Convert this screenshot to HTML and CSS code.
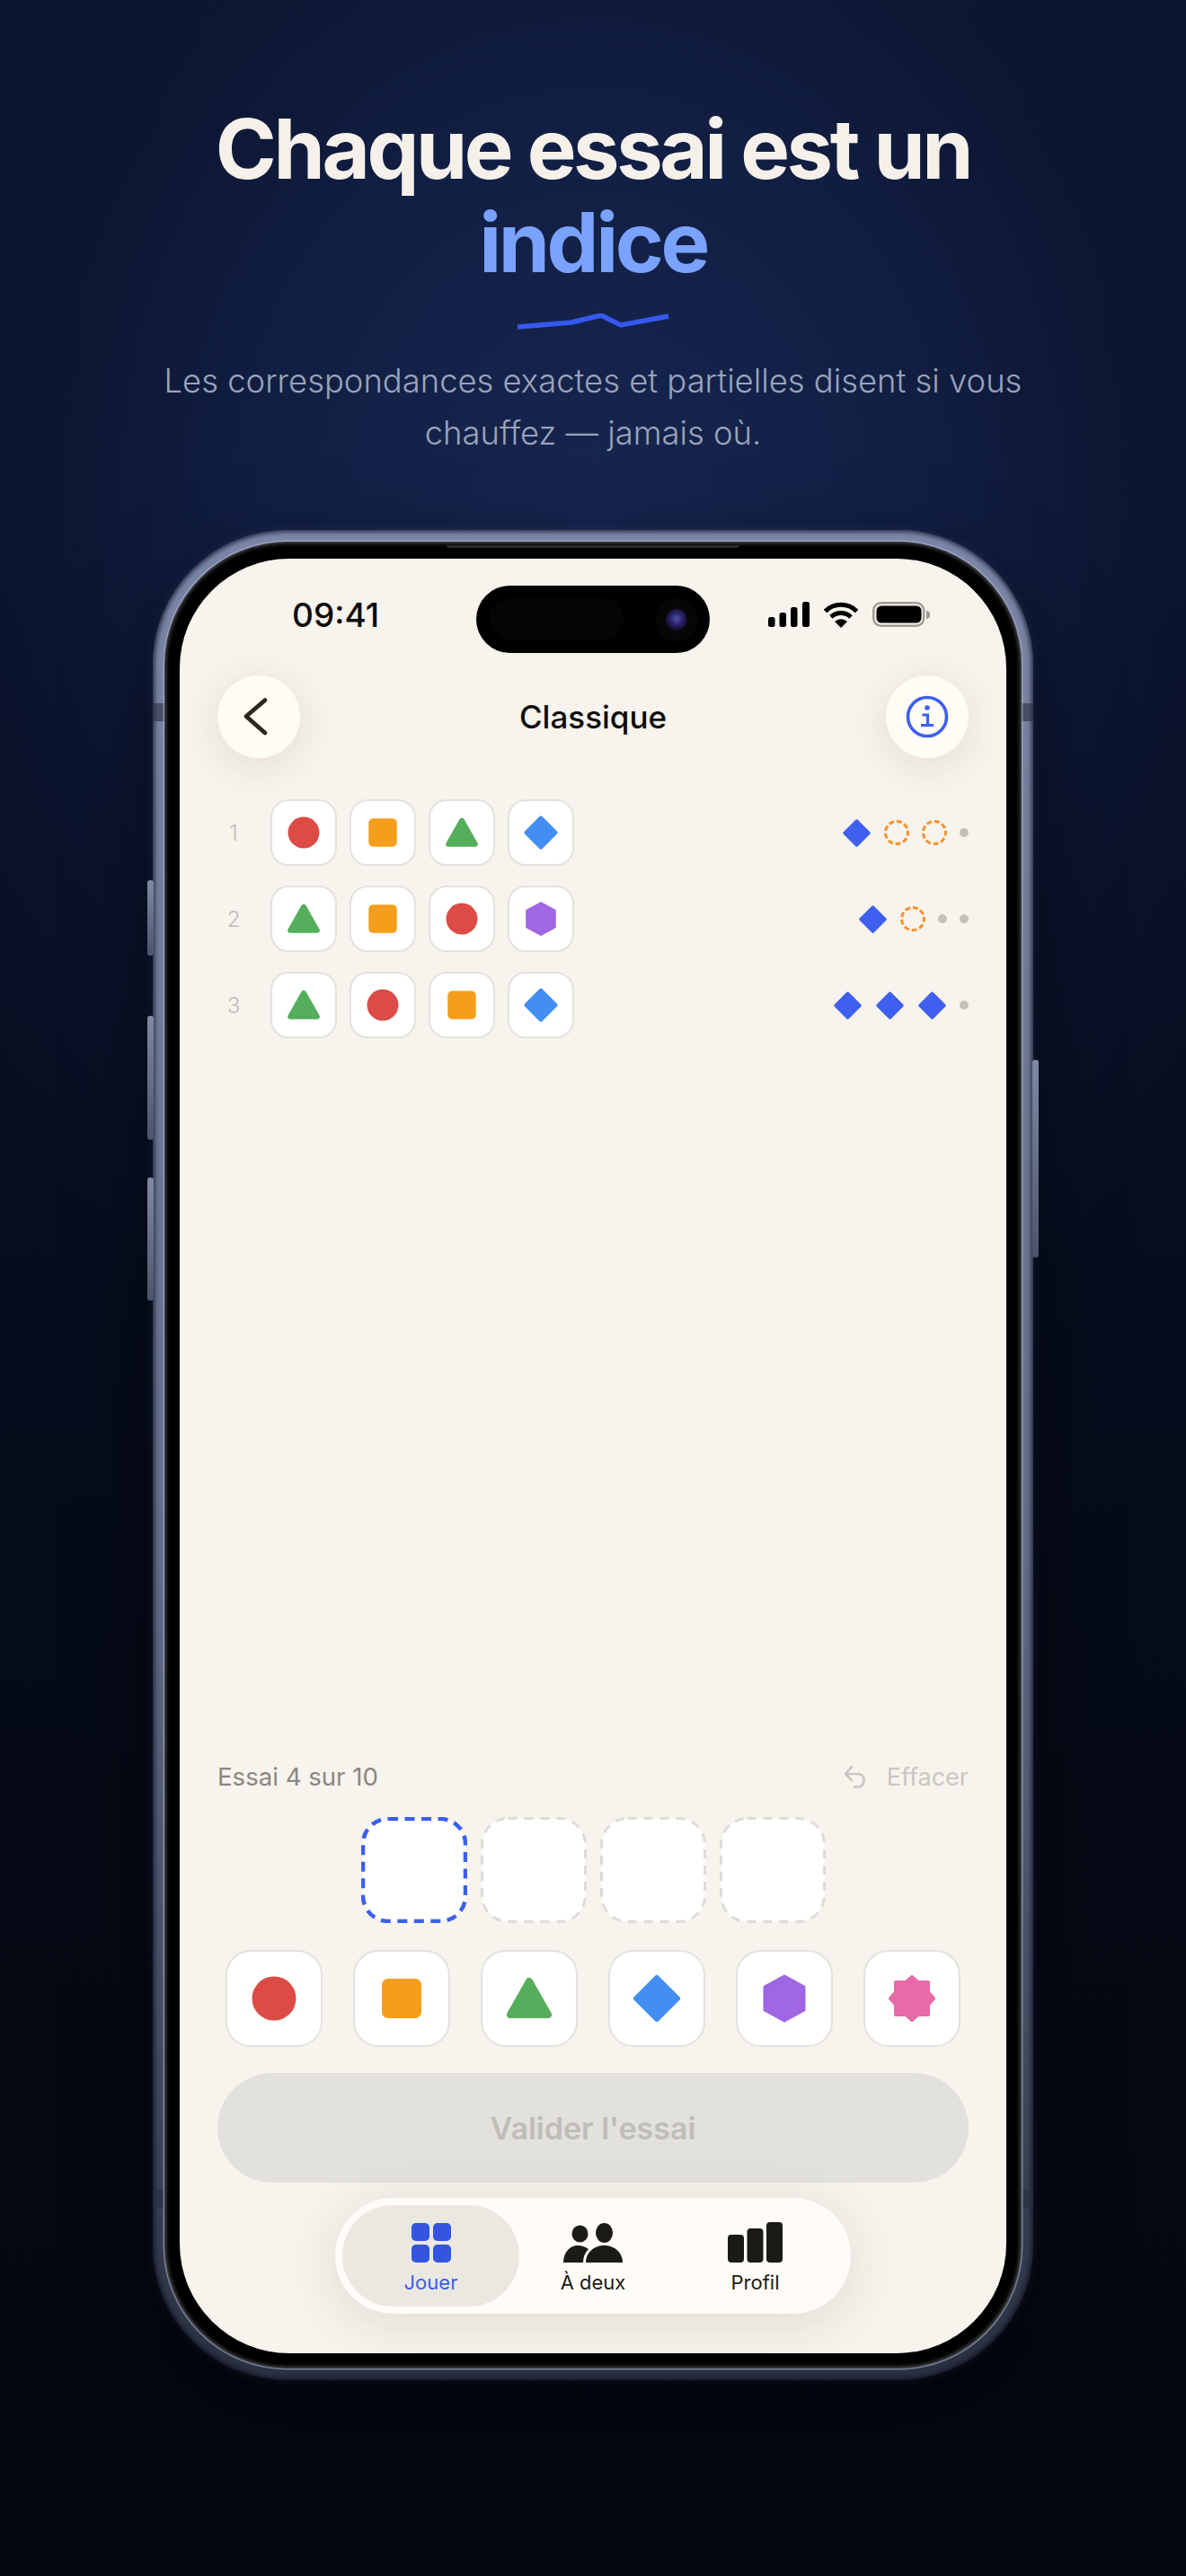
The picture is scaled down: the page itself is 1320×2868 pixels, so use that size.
FILE: index.html
```html
<!DOCTYPE html>
<html lang="fr">
<head>
  <meta charset="UTF-8">
  <title>Chaque essai est un indice</title>
  <meta name="viewport" content="width=device-width, initial-scale=1.0">
  <link rel="stylesheet" href="styles.css">
</head>
<body>
  <!-- shapes used by the board and the palette -->
  <svg class="sprite">
    <symbol id="s-circle" viewBox="0 0 56 56"><ellipse cx="28" cy="28" rx="24.5" ry="24.5" fill="#dd4b46"/></symbol>
    <symbol id="s-square" viewBox="0 0 56 56"><rect x="6" y="6" width="44" height="44" rx="7" fill="#f49e1c"/></symbol>
    <symbol id="s-triangle" viewBox="0 0 56 56"><polygon points="28,9 49,46 7,46" fill="#54ae5b" stroke="#54ae5b" stroke-width="8" stroke-linejoin="round"/></symbol>
    <symbol id="s-diamond" viewBox="0 0 56 56"><polygon points="28,5 51,28 28,51 5,28" fill="#438ef3" stroke="#438ef3" stroke-width="6" stroke-linejoin="round"/></symbol>
    <symbol id="s-hexagon" viewBox="0 0 56 56"><polygon points="28,3 50,15 50,41 28,53 6,41 6,15" fill="#9f67e3" stroke="#9f67e3" stroke-width="3" stroke-linejoin="round"/></symbol>
    <symbol id="s-flower" viewBox="0 0 56 56"><polygon points="28,4 34.500,10 46,10 46,21 52,28 46,35 46,46 34.500,46 28,52 21.500,46 10,46 10,35 4,28 10,21 10,10 21.500,10" fill="#e66ba6" stroke="#e66ba6" stroke-width="4" stroke-linejoin="round"/></symbol>
    <symbol id="s-exact" viewBox="0 0 33 33"><polygon points="16.5,3 30,16.5 16.5,30 3,16.5" fill="#3f5fee" stroke="#3f5fee" stroke-width="3.5" stroke-linejoin="round"/></symbol>
  </svg>

  <header class="hero">
    <h1>Chaque essai est un<br><span class="accent">indice</span></h1>
    <svg class="squiggle" width="172" height="18" viewBox="0 0 172 18"><polyline points="2,15 62,10 95,2 117,13 170,3" fill="none" stroke="#3558f0" stroke-width="5.500"/></svg>
    <p>Les correspondances exactes et partielles disent si vous<br>chauffez — jamais où.</p>
  </header>

  <div class="phone">
    <span class="side side-a"></span>
    <span class="side side-b"></span>
    <span class="side side-c"></span>
    <span class="side side-d"></span>
    <span class="band band-tl"></span>
    <span class="band band-tr"></span>
    <span class="band band-bl"></span>
    <span class="band band-br"></span>
    <div class="bezel">
      <span class="speaker"></span>
      <div class="screen">
        <div class="island">
          <span class="sensor"></span>
          <span class="camera"></span>
        </div>

        <div class="status">
          <span class="time">09:41</span>
          <div class="status-icons">
            <svg width="46" height="28" viewBox="0 0 46 28" fill="#000">
              <rect x="0" y="17" width="7.5" height="11" rx="2.5"/>
              <rect x="12.5" y="12" width="7.5" height="16" rx="2.5"/>
              <rect x="25" y="6" width="7.5" height="22" rx="2.5"/>
              <rect x="38" y="0" width="8" height="28" rx="2.5"/>
            </svg>
            <svg width="40" height="29" viewBox="0 0 40 29">
              <path d="M2.5 10.5 A25 25 0 0 1 37.5 10.5" fill="none" stroke="#000" stroke-width="5"/>
              <path d="M9 17 A16 16 0 0 1 31 17" fill="none" stroke="#000" stroke-width="5"/>
              <path d="M20 29 L13 22 A10 10 0 0 1 27 22 Z" fill="#000"/>
            </svg>
            <svg width="64" height="28" viewBox="0 0 64 28">
              <rect x="1.2" y="1.2" width="56" height="25.6" rx="8.5" fill="none" stroke="#a09c94" stroke-width="2.4"/>
              <rect x="4.5" y="4.5" width="50" height="19" rx="5.5" fill="#000"/>
              <path d="M60 10 a4 4 0 0 1 0 9 Z" fill="#a09c94"/>
            </svg>
          </div>
        </div>

        <div class="topbar">
          <button class="round-btn">
            <svg class="chevron" width="30" height="44" viewBox="0 0 30 44"><path d="M25 3.500 L4 21.500 L25 40" fill="none" stroke="#2a2620" stroke-width="4.800" stroke-linecap="round" stroke-linejoin="round"/></svg>
          </button>
          <h2>Classique</h2>
          <button class="round-btn">
            <svg width="48" height="48" viewBox="0 0 48 48" fill="none" stroke="#3d5ff0">
              <circle cx="24" cy="24" r="21.5" stroke-width="3.6"/>
              <circle cx="24" cy="14" r="2.8" fill="#3d5ff0" stroke="none"/>
              <path d="M18.5 22 H24.5 V33 M17 33.5 H31" stroke-width="3.2"/>
            </svg>
          </button>
        </div>

        <div class="board">
          <div class="row">
            <span class="row-num">1</span>
            <div class="cells">
              <div class="cell"><svg><use href="#s-circle"/></svg></div>
              <div class="cell"><svg><use href="#s-square"/></svg></div>
              <div class="cell"><svg><use href="#s-triangle"/></svg></div>
              <div class="cell"><svg><use href="#s-diamond"/></svg></div>
            </div>
            <div class="hints">
              <svg class="exact"><use href="#s-exact"/></svg>
              <span class="partial"></span>
              <span class="partial"></span>
              <span class="miss"></span>
            </div>
          </div>
          <div class="row">
            <span class="row-num">2</span>
            <div class="cells">
              <div class="cell"><svg><use href="#s-triangle"/></svg></div>
              <div class="cell"><svg><use href="#s-square"/></svg></div>
              <div class="cell"><svg><use href="#s-circle"/></svg></div>
              <div class="cell"><svg><use href="#s-hexagon"/></svg></div>
            </div>
            <div class="hints">
              <svg class="exact"><use href="#s-exact"/></svg>
              <span class="partial"></span>
              <span class="miss"></span>
              <span class="miss"></span>
            </div>
          </div>
          <div class="row">
            <span class="row-num">3</span>
            <div class="cells">
              <div class="cell"><svg><use href="#s-triangle"/></svg></div>
              <div class="cell"><svg><use href="#s-circle"/></svg></div>
              <div class="cell"><svg><use href="#s-square"/></svg></div>
              <div class="cell"><svg><use href="#s-diamond"/></svg></div>
            </div>
            <div class="hints">
              <svg class="exact"><use href="#s-exact"/></svg>
              <svg class="exact"><use href="#s-exact"/></svg>
              <svg class="exact"><use href="#s-exact"/></svg>
              <span class="miss"></span>
            </div>
          </div>
        </div>

        <div class="attempt">
          <span>Essai 4 sur 10</span>
          <span class="clear">
            <svg width="28" height="26" viewBox="0 0 28 26" fill="none" stroke="#c9c7c2" stroke-width="2.6" stroke-linecap="round" stroke-linejoin="round"><path d="M9 2 L2 10 L9 17 M2 10 H17 a7.5 7.5 0 0 1 0 14.5 H12"/></svg>
            Effacer
          </span>
        </div>

        <div class="slots">
          <svg class="slot" viewBox="0 0 118 118"><rect class="line-active" x="2" y="2" width="114" height="114" rx="28"/></svg>
          <svg class="slot" viewBox="0 0 118 118"><rect class="line" x="1.500" y="1.500" width="115" height="115" rx="29"/></svg>
          <svg class="slot" viewBox="0 0 118 118"><rect class="line" x="1.500" y="1.500" width="115" height="115" rx="29"/></svg>
          <svg class="slot" viewBox="0 0 118 118"><rect class="line" x="1.500" y="1.500" width="115" height="115" rx="29"/></svg>
        </div>

        <div class="palette">
          <div class="pick"><svg><use href="#s-circle"/></svg></div>
          <div class="pick"><svg><use href="#s-square"/></svg></div>
          <div class="pick"><svg><use href="#s-triangle"/></svg></div>
          <div class="pick"><svg><use href="#s-diamond"/></svg></div>
          <div class="pick"><svg><use href="#s-hexagon"/></svg></div>
          <div class="pick"><svg><use href="#s-flower"/></svg></div>
        </div>

        <button class="submit">Valider l'essai</button>

        <nav class="tabs">
          <div class="tab active">
            <svg width="44" height="44" viewBox="0 0 44 44" fill="#3355e0">
              <rect width="20" height="20" rx="5"/>
              <rect x="24" width="20" height="20" rx="5"/>
              <rect y="24" width="20" height="20" rx="5"/>
              <rect x="24" y="24" width="20" height="20" rx="5"/>
            </svg>
            <span>Jouer</span>
          </div>
          <div class="tab">
            <svg width="66" height="44" viewBox="0 0 66 44" fill="#1c1a16">
              <ellipse cx="18.5" cy="12" rx="9" ry="9.5"/>
              <ellipse cx="45.5" cy="11" rx="9.5" ry="11"/>
              <path d="M0 44 C0 32 8 25 16 25 C21 25 25 27 28 29 C24 33 22 38 22 44 Z"/>
              <path d="M25 44 C25 33 34 25 45.5 25 C57 25 66 33 66 44 Z"/>
            </svg>
            <span>À deux</span>
          </div>
          <div class="tab">
            <svg width="61" height="45" viewBox="0 0 61 45" fill="#1c1a16">
              <rect y="14" width="18" height="31" rx="4"/>
              <rect x="21.500" y="7" width="18" height="38" rx="4"/>
              <rect x="43" width="18" height="45" rx="4"/>
            </svg>
            <span>Profil</span>
          </div>
        </nav>
      </div>
    </div>
  </div>
</body>
</html>
```

FILE: styles.css
```css
* {
  box-sizing: border-box;
}
html, body {
  margin: 0;
  padding: 0;
  width: 1320px;
  height: 2868px;
  overflow: hidden;
}
body {
  font-family: Inter, 'Noto Sans', sans-serif;
  color: #111;
  background:
    radial-gradient(ellipse 900px 1050px at 50% 20%, #172650 0%, #121f44 40%, rgba(13, 23, 52, 0.55) 70%, rgba(8, 14, 32, 0) 100%),
    linear-gradient(180deg, #0c152f 0%, #080f22 35%, #050a16 70%, #04070f 100%);
}
.sprite {
  display: none;
}

/* heading above the phone */
.hero {
  height: 590px;
  padding-top: 114px;
  text-align: center;
}
.hero h1 {
  margin: 0;
  font-size: 92px;
  line-height: 104px;
  font-weight: 700;
  letter-spacing: -0.037em;
  color: #f5f1ea;
}
.accent {
  color: #7aa2ff;
}
.squiggle {
  display: block;
  margin: 27px auto 0;
}
.hero p {
  margin: 28px 0 0;
  font-size: 36.4px;
  line-height: 58px;
  font-weight: 300;
  color: #9aa3bb;
}

/* phone body */
.phone {
  position: relative;
  width: 980px;
  height: 2060px;
  margin: 0 auto;
  padding: 13px;
  border-radius: 150px;
  background: linear-gradient(180deg, #7b86a6 0%, #6e7894 30%, #636c88 55%, #3f4659 85%, #2b3040 100%);
  box-shadow: inset 0 0 5px 2px rgba(8, 14, 32, 0.75), 0 0 12px rgba(120, 140, 200, 0.12), 0 30px 90px rgba(0, 0, 0, 0.5);
}
.side {
  position: absolute;
  width: 7px;
  border-radius: 3px;
  background: linear-gradient(180deg, #7f89a4, #4c546b);
}
.side-a { left: -6px; top: 390px; height: 84px; }
.side-b { left: -6px; top: 541px; height: 138px; }
.side-c { left: -6px; top: 721px; height: 137px; }
.side-d { right: -6px; top: 590px; height: 220px; }
.band {
  position: absolute;
  width: 13px;
  height: 20px;
  background: rgba(40, 46, 64, 0.6);
}
.band-tl { left: 0; top: 193px; }
.band-tr { right: 0; top: 193px; }
.band-bl { left: 0; bottom: 192px; }
.band-br { right: 0; bottom: 192px; }
.bezel {
  position: relative;
  height: 100%;
  padding: 19px 17px 17px;
  border-radius: 137px;
  background: #000;
  box-shadow: 0 0 0 1.5px rgba(175, 188, 225, 0.55), inset 0 0 5px 1px rgba(255, 255, 255, 0.4);
}
.speaker {
  position: absolute;
  left: 314px;
  top: 4px;
  width: 326px;
  height: 3px;
  border-radius: 0 0 6px 6px;
  background: #2b2b2b;
}
.screen {
  position: relative;
  display: flex;
  flex-direction: column;
  height: 100%;
  padding: 0 42px 44px;
  border-radius: 122px;
  background: #f7f3ed;
  overflow: hidden;
}
.island {
  position: absolute;
  left: 330px;
  top: 30px;
  display: flex;
  align-items: center;
  justify-content: space-between;
  width: 260px;
  height: 75px;
  padding: 0 14px;
  border-radius: 38px;
  background: #000;
}
.sensor {
  width: 150px;
  height: 47px;
  border-radius: 24px;
  background: #050505;
}
.camera {
  width: 24px;
  height: 24px;
  margin-right: 11px;
  border-radius: 50%;
  background: radial-gradient(circle at 50% 45%, #4a56a0 0%, #2a1f66 40%, #0d0b22 75%, #050509 100%);
  box-shadow: 0 0 0 12px #060607;
}

/* status bar */
.status {
  display: flex;
  align-items: center;
  justify-content: space-between;
  height: 130px;
  padding: 0 43px 6px 83px;
  flex: none;
}
.time {
  font-size: 37px;
  font-weight: 500;
  color: #0c0c0c;
}
.status-icons {
  display: flex;
  align-items: center;
  gap: 15px;
}
.topbar {
  display: flex;
  align-items: center;
  justify-content: space-between;
  height: 92px;
  flex: none;
}
.topbar h2 {
  margin: 0;
  font-size: 35px;
  font-weight: 500;
  color: #0c0c0c;
}
.round-btn {
  display: flex;
  align-items: center;
  justify-content: center;
  width: 92px;
  height: 92px;
  padding: 0;
  border: none;
  border-radius: 50%;
  background: #fffbf5;
  box-shadow: 0 8px 44px rgba(60, 50, 30, 0.11);
}
.chevron {
  margin-right: 6px;
}

/* past attempts */
.board {
  display: flex;
  flex-direction: column;
  gap: 22px;
  margin-top: 46px;
  flex: 1;
}
.row {
  display: flex;
  align-items: center;
}
.row-num {
  width: 36px;
  margin-right: 23px;
  font-size: 24px;
  font-weight: 300;
  text-align: center;
  color: #bdbbb6;
}
.cells {
  display: flex;
  gap: 14px;
}
.cell {
  display: flex;
  align-items: center;
  justify-content: center;
  width: 74px;
  height: 74px;
  border: 2px solid #e4e2de;
  border-radius: 20px;
  background: #fff;
}
.cell svg {
  width: 40px;
  height: 40px;
}
.hints {
  display: flex;
  align-items: center;
  gap: 14px;
  margin-left: auto;
}
.exact {
  width: 33px;
  height: 33px;
}
.partial {
  width: 28px;
  height: 28px;
  border: 3px dashed #f5922b;
  border-radius: 50%;
}
.miss {
  width: 10px;
  height: 10px;
  border-radius: 50%;
  background: #c4c1bb;
}

/* current attempt */
.attempt {
  display: flex;
  align-items: center;
  justify-content: space-between;
  height: 36px;
  font-size: 27.6px;
  color: #8a8782;
  flex: none;
}
.clear {
  display: flex;
  align-items: center;
  gap: 20px;
  font-size: 27px;
  color: #c9c7c2;
}
.slots {
  display: flex;
  justify-content: center;
  gap: 15px;
  margin-top: 27px;
  flex: none;
}
.slot {
  width: 118px;
  height: 118px;
}
.line {
  fill: #fff;
  stroke: #dedcd8;
  stroke-width: 3;
  stroke-dasharray: 10 8;
}
.line-active {
  fill: #fff;
  stroke: #3b5ff0;
  stroke-width: 4.5;
  stroke-dasharray: 11 7.5;
}
.palette {
  display: flex;
  justify-content: center;
  gap: 34px;
  margin-top: 30px;
  flex: none;
}
.pick {
  display: flex;
  align-items: center;
  justify-content: center;
  width: 108px;
  height: 108px;
  border: 2px solid #e4e2de;
  border-radius: 28px;
  background: #fff;
}
.pick svg {
  width: 56px;
  height: 56px;
}
.submit {
  height: 122px;
  margin-top: 29px;
  border: none;
  border-radius: 61px;
  background: #e3e1dc;
  font-family: inherit;
  font-size: 34px;
  font-weight: 600;
  color: #bfbdb8;
  flex: none;
}

/* bottom tabs */
.tabs {
  display: grid;
  grid-template-columns: 197px 1fr 197px;
  width: 574px;
  height: 129px;
  margin: 17px auto 0;
  padding: 8px;
  border-radius: 65px;
  background: #fffcf7;
  box-shadow: 0 10px 60px rgba(60, 50, 30, 0.12);
  flex: none;
}
.tab {
  display: flex;
  flex-direction: column;
  align-items: center;
  justify-content: flex-end;
  gap: 9px;
  padding-bottom: 14px;
  border-radius: 57px;
  font-size: 22px;
  font-weight: 400;
  color: #1c1a16;
}
.tab.active {
  background: #ebe8e2;
  color: #3b5ce8;
}
```
